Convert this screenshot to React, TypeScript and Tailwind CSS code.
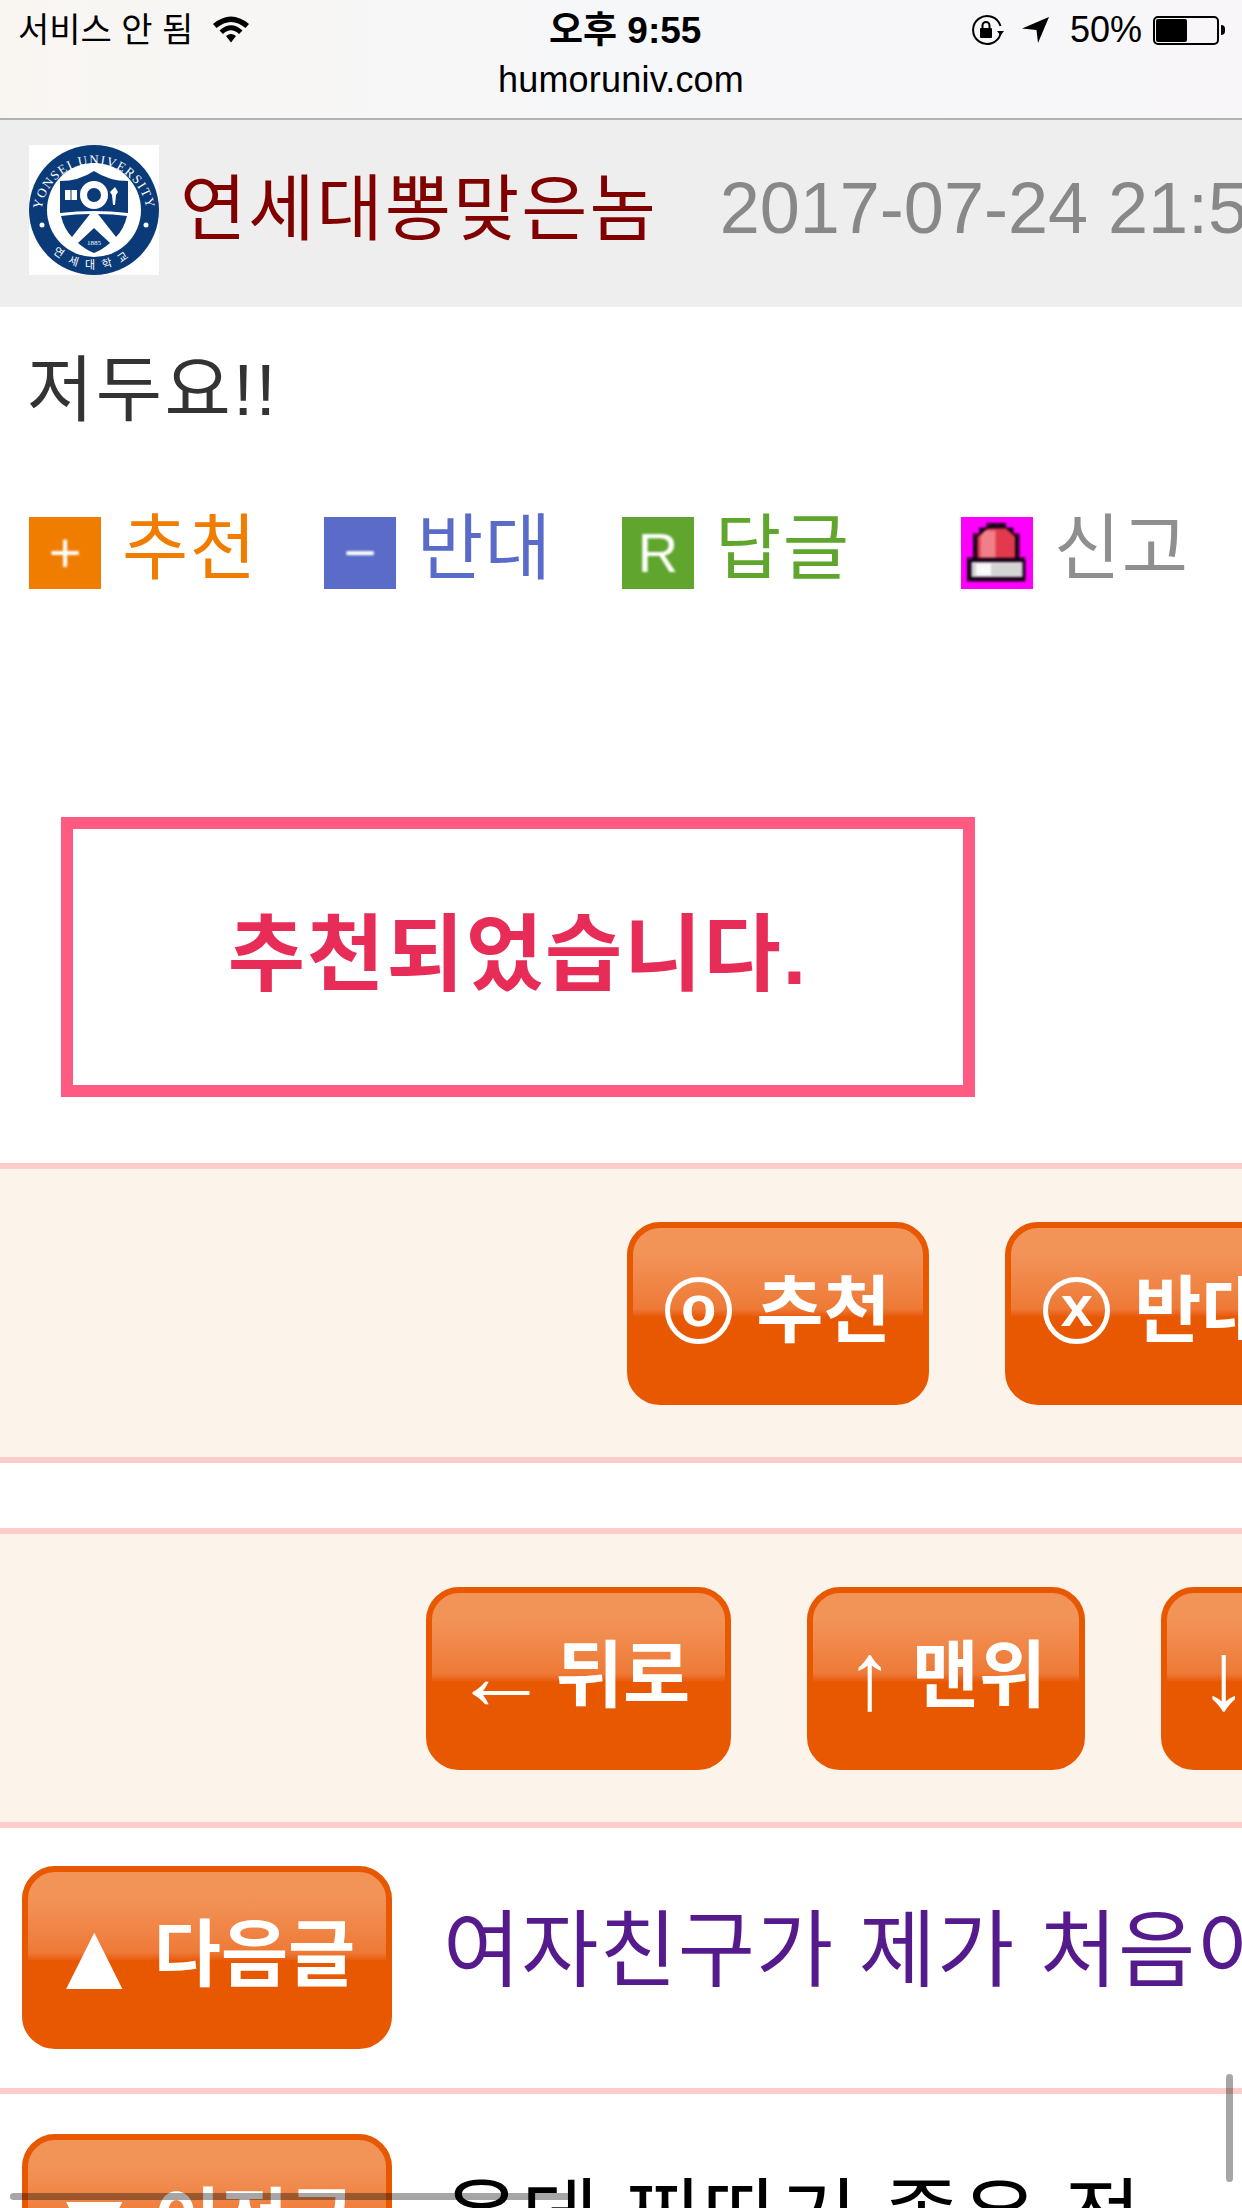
import { ReactNode } from "react";

const KR = "font-['Liberation_Sans','Noto_Sans_CJK_KR',sans-serif]";

const Logo = () => (
  <svg viewBox="0 0 130 130" className="w-[130px] h-[130px] bg-white shrink-0 -mt-[8px]">
    <circle cx="65" cy="65" r="65" fill="#0a3a78" />
    <circle cx="65" cy="65" r="47" fill="#fff" />
    <path id="topArc" d="M 12 72 A 53 53 0 0 1 118 72" fill="none" />
    <path id="botArc" d="M 8 80 A 59 59 0 0 0 122 80" fill="none" />
    <text fill="#fff" fontSize="13" fontFamily="Liberation Serif, serif" letterSpacing="1.3">
      <textPath href="#topArc" startOffset="50%" textAnchor="middle">YONSEI UNIVERSITY</textPath>
    </text>
    <text fill="#fff" fontSize="11" fontFamily="Noto Sans CJK KR, sans-serif" letterSpacing="8">
      <textPath href="#botArc" startOffset="50%" textAnchor="middle">연세대학교</textPath>
    </text>
    <circle cx="13" cy="80" r="2.5" fill="#fff" />
    <circle cx="117" cy="80" r="2.5" fill="#fff" />
    <path d="M31 36 Q50 36 65 26 Q80 36 99 36 L99 68 Q65 64 31 68 Z" fill="#0a3a78" />
    <circle cx="65" cy="50" r="10.5" fill="#0a3a78" stroke="#fff" strokeWidth="7" />
    <rect x="36" y="45" width="12" height="10" fill="#fff" />
    <rect x="41.5" y="45" width="1" height="10" fill="#0a3a78" />
    <path d="M86 42 l3 5 l-2 3 l-1 10 h-2 l-1 -10 l-2 -3 z" fill="#fff" />
    <path d="M32 71 Q46 69 61 69 L43 92 Q35 84 32 71 Z" fill="#0a3a78" />
    <path d="M98 71 Q84 69 69 69 L87 92 Q95 84 98 71 Z" fill="#0a3a78" />
    <path d="M65 83 L81 98 Q73 105 65 108 Q57 105 49 98 Z" fill="#0a3a78" />
    <text x="65" y="100" fill="#fff" fontSize="7" textAnchor="middle" fontFamily="Liberation Serif, serif">1885</text>
  </svg>
);

const Siren = () => (
  <svg viewBox="0 0 24 24" className="w-[72px] h-[72px] bg-[#ff00ff] shrink-0">
    <g className="blur-[0.35px]">
      <path d="M8.5 2h6.5v1.5h2.5v2h2v8h2v8H2v-8h2v-8h2v-2h2.5z" fill="#1a001a" />
      <path d="M9 3.8h6l3 2.8v7H5.5v-7z" fill="#e23a4c" />
      <path d="M8 4.5h3.5v9H6.5v-7z" fill="#f08088" />
      <rect x="3.5" y="15" width="17" height="5" fill="#d4d4d4" />
      <rect x="5" y="15.5" width="5" height="4" fill="#fafafa" />
    </g>
  </svg>
);

const ActionIcon = ({ bg, children }: { bg: string; children: string }) => (
  <span className={`w-[72px] h-[72px] shrink-0 flex items-center justify-center overflow-hidden ${bg}`}>
    <span className="text-white text-[56px] leading-none font-normal blur-[1px]">{children}</span>
  </span>
);

const Action = ({ icon, label, color, width }: { icon: ReactNode; label: string; color: string; width: string }) => (
  <div className={`flex items-center shrink-0 gap-[21px] ${width}`}>
    {icon}
    <span className={`text-[72px] leading-none -translate-y-[5px] tracking-[1.5px] ${color}`}>{label}</span>
  </div>
);

const OrangeButton = ({ children, width, icon, gap = "gap-[24px]" }: { children: string; width: string; icon?: ReactNode; gap?: string }) => (
  <div className={`h-[183px] shrink-0 rounded-[33px] border-[6px] border-[#e85800] bg-gradient-to-b from-[#f29358] from-[15%] via-[#ee7a36] via-[47%] to-[#e85800] to-[52%] flex items-center justify-center text-white font-bold text-[73px] leading-none ${gap} ${width}`}>
    {icon}
    <span className="-translate-y-[3px] whitespace-nowrap">{children}</span>
  </div>
);

const CircleGlyph = ({ letter }: { letter: string }) => (
  <span className="w-[67px] h-[67px] -translate-y-[3px] rounded-full border-[5px] border-white flex items-center justify-center text-[58px] leading-none font-bold shrink-0">
    <span className="-translate-y-[4px]">{letter}</span>
  </span>
);

// arrows and triangles run bigger and thinner than the hangul next to them
const GlyphMark = ({ children, size }: { children: string; size: string }) => (
  <span className={`font-normal leading-none -translate-y-[2px] ${size}`}>{children}</span>
);

const Band = ({ children, pl, h }: { children: ReactNode; pl: string; h: string }) => (
  <div className={`shrink-0 border-y-[6px] border-[#ffcccc] bg-[#fcf3ea] flex items-center overflow-hidden ${h} ${pl}`}>
    {children}
  </div>
);

const App = () => {
  return (
    <div className={`relative w-[1242px] h-[2208px] overflow-hidden bg-white flex flex-col ${KR}`}>
      {/* safari top bar */}
      <div className="h-[120px] shrink-0 border-b-2 border-[#b2b2b2] bg-gradient-to-r from-[#f9f6f2] via-[#f6f7f9] to-[#f8f6f8] flex flex-col text-black">
        <div className="relative h-[60px] flex items-center justify-between pl-[18px] pr-[17px]">
          <div className="flex items-center gap-[19px]">
            <span className="text-[34px] leading-none whitespace-nowrap">서비스 안 됨</span>
            <svg viewBox="0 0 38 28" className="w-[38px] h-[28px] -translate-y-[1px]">
              <path d="M1 9 Q19 -6 37 9 L33.5 13 Q19 1 4.5 13 Z M7.5 15.5 Q19 5 30.5 15.5 L27 19 Q19 11.5 11 19 Z M14 21 Q19 17 24 21 L19 27.5 Z" fill="#000" />
            </svg>
          </div>
          <span className="absolute left-[549px] top-[11px] text-[37px] leading-[40px] font-bold whitespace-nowrap">오후 9:55</span>
          <div className="flex items-center">
            <svg viewBox="0 0 35 32" className="w-[35px] h-[32px]">
              <path d="M30.5 20 A14 14 0 1 1 30.5 12" fill="none" stroke="#000" strokeWidth="2" />
              <path d="M27 17 h7 l-3.5 4.5 z" fill="#000" />
              <rect x="10" y="14" width="12" height="10" rx="1" fill="#000" />
              <path d="M12.5 14 v-2.5 a3.5 3.5 0 0 1 7 0 v2.5" fill="none" stroke="#000" strokeWidth="2" />
            </svg>
            <svg viewBox="0 0 28 28" className="w-[28px] h-[28px] ml-[17px]">
              <path d="M27 1 L16 27 L14.5 14 L0 12.5 Z" fill="#000" />
            </svg>
            <span className="text-[36px] leading-none ml-[20px]">50%</span>
            <div className="flex items-center ml-[11px]">
              <div className="w-[66px] h-[29px] border-2 border-black rounded-[5px] p-[1px]">
                <div className="w-[31px] h-full bg-black rounded-[2px]" />
              </div>
              <div className="w-[4px] h-[10px] ml-[2px] bg-black rounded-r-full" />
            </div>
          </div>
        </div>
        <div className="text-center text-[36px] leading-[40px] tracking-[0.2px]">humoruniv.com</div>
      </div>

      {/* writer row */}
      <div className="h-[187px] shrink-0 bg-[#eeeeee] flex items-center pl-[29px] pr-0 overflow-hidden whitespace-nowrap">
        <Logo />
        <span className="ml-[21px] text-[72px] leading-none text-[#800000] -translate-y-[5px] tracking-[2px]">연세대뽕맞은놈</span>
        <span className="ml-[62px] text-[72px] leading-none text-[#888888] -translate-y-[6px]">2017-07-24 21:55</span>
      </div>

      {/* comment */}
      <div className="pl-[27px] pt-[41px] text-[72px] leading-[84px] tracking-[2.5px] text-[#333333] shrink-0">저두요!!</div>

      {/* actions */}
      <div className="flex items-center pl-[29px] mt-[85px] h-[72px] shrink-0 whitespace-nowrap">
        <Action width="w-[295px]" color="text-[#f07c00]" label="추천" icon={<ActionIcon bg="bg-[#f07c00]">+</ActionIcon>} />
        <Action width="w-[298px]" color="text-[#5a6bc8]" label="반대" icon={<ActionIcon bg="bg-[#5a6bc8]">−</ActionIcon>} />
        <Action width="w-[339px]" color="text-[#60a52d]" label="답글" icon={<ActionIcon bg="bg-[#60a52d]">R</ActionIcon>} />
        <Action width="w-[250px]" color="text-[#8f8f8f]" label="신고" icon={<Siren />} />
      </div>

      {/* notice */}
      <div className="ml-[61px] mt-[228px] w-[914px] h-[280px] shrink-0 border-[12px] border-[#ff5a82] flex items-center justify-center">
        <span className="text-[84px] leading-none font-bold text-[#e82c58] -translate-y-[2px] tracking-[2px] whitespace-nowrap">추천되었습니다.</span>
      </div>

      {/* vote band */}
      <div className="mt-[66px] shrink-0">
        <Band h="h-[300px]" pl="pl-[627px] gap-[76px]">
          <OrangeButton width="w-[302px]" icon={<CircleGlyph letter="o" />}>추천</OrangeButton>
          <OrangeButton width="w-[302px]" icon={<CircleGlyph letter="x" />}>반대</OrangeButton>
        </Band>
      </div>

      {/* nav band */}
      <div className="mt-[65px] shrink-0">
        <Band h="h-[300px]" pl="pl-[426px] gap-[76px]">
          <OrangeButton width="w-[305px]" gap="gap-[7px] pr-[14px]" icon={<GlyphMark size="text-[96px]">←</GlyphMark>}>뒤로</OrangeButton>
          <OrangeButton width="w-[278px]" gap="gap-[18px]" icon={<GlyphMark size="text-[96px]">↑</GlyphMark>}>맨위</OrangeButton>
          <OrangeButton width="w-[278px]" gap="gap-[18px]" icon={<GlyphMark size="text-[96px]">↓</GlyphMark>}>아래</OrangeButton>
        </Band>
      </div>

      {/* next post */}
      <div className="h-[266px] shrink-0 border-b-[6px] border-[#ffcccc] flex items-start pt-[38px] pl-[22px] whitespace-nowrap overflow-hidden">
        <OrangeButton width="w-[370px]" gap="gap-[12px] pr-[12px]" icon={<GlyphMark size="text-[96px]">▲</GlyphMark>}>다음글</OrangeButton>
        <span className="ml-[51px] mt-[43px] text-[84px] leading-none text-[#551a8b] tracking-[1px]">여자친구가 제가 처음이라는데</span>
      </div>

      {/* prev post */}
      <div className="flex-1 flex items-start pt-[40px] pl-[22px] whitespace-nowrap overflow-hidden">
        <OrangeButton width="w-[370px]" gap="gap-[12px] pr-[12px]" icon={<GlyphMark size="text-[96px]">▼</GlyphMark>}>이전글</OrangeButton>
        <span className="ml-[51px] mt-[43px] text-[84px] leading-none text-black tracking-[1px]">옷데 찌따기 좋은 적</span>
      </div>

      {/* scroll indicators */}
      <div className="absolute left-[10px] top-[2193px] w-[562px] h-[7px] rounded-full bg-black/35" />
      <div className="absolute left-[1226px] top-[2074px] w-[7px] h-[108px] rounded-full bg-black/35" />
    </div>
  );
};

export default App;
